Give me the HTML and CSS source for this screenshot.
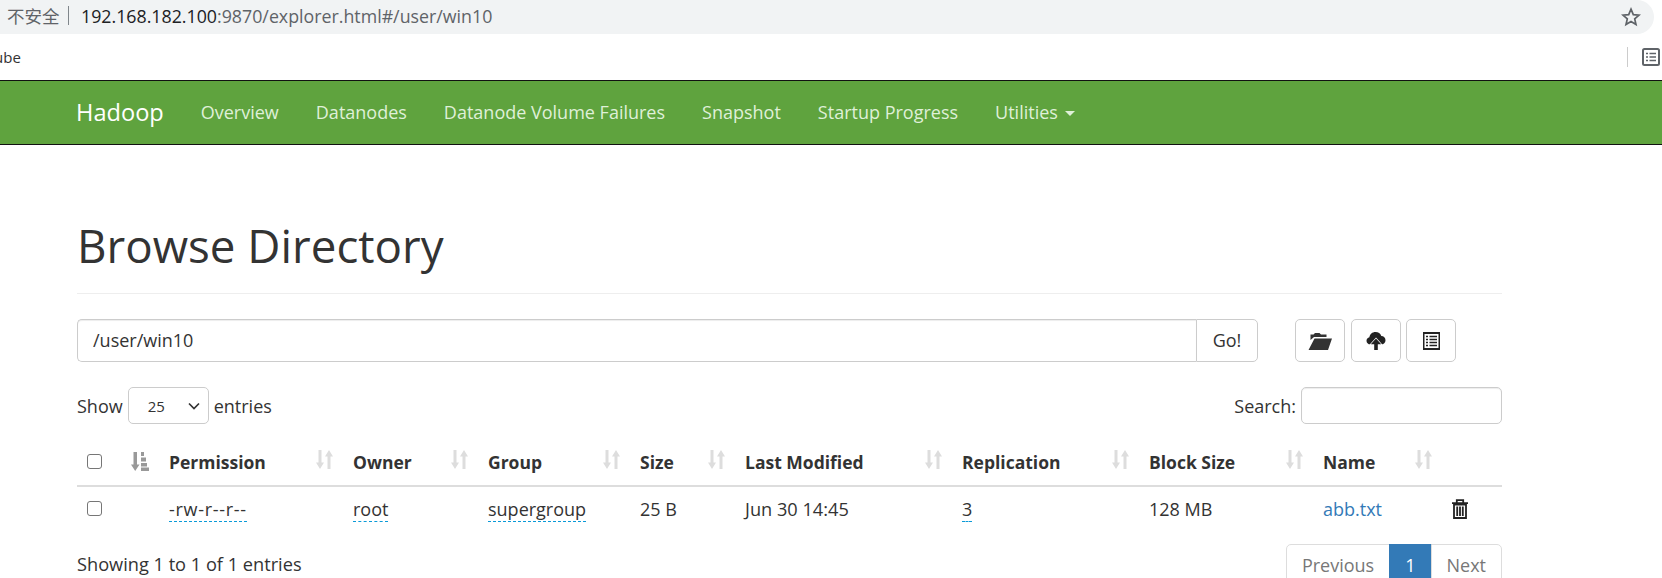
FILE: index.html
```html
<!DOCTYPE html>
<html lang="zh">
<head>
<meta charset="utf-8">
<title>Browsing HDFS</title>
<link rel="stylesheet" href="styles.css">
</head>
<body>
<div class="chrome-address">
  <div class="addr-text">
    <span class="insecure">不安全</span><span class="addr-sep"></span>
    <span class="url"><b>192.168.182.100</b>:9870/explorer.html#/user/win10</span>
  </div>
  <svg class="star" viewBox="0 0 20 20" width="20" height="20"><path d="M10 2.200l2.300 5.400 5.800.5-4.400 3.800 1.300 5.700-5-3-5 3 1.300-5.700-4.400-3.800 5.800-.5z" fill="none" stroke="#5f6368" stroke-width="1.700" stroke-linejoin="miter"/></svg>
</div>
<div class="chrome-bookmarks">
  <span class="bm-label">ube</span>
  <span class="bm-right">
    <span class="bm-divider"></span>
    <svg viewBox="0 0 18 18" width="18" height="18"><rect x="1" y="1" width="16" height="16" rx="1.500" fill="none" stroke="#5f6368" stroke-width="2"/><path d="M4 5.500h2M4 9h2M4 12.500h2M7.500 5.500h6.500M7.500 9h6.500M7.500 12.500h6.500" stroke="#5f6368" stroke-width="1.600"/></svg>
  </span>
</div>
<nav class="navbar">
  <a class="brand">Hadoop</a>
  <a class="nav-link">Overview</a>
  <a class="nav-link">Datanodes</a>
  <a class="nav-link">Datanode Volume Failures</a>
  <a class="nav-link">Snapshot</a>
  <a class="nav-link">Startup Progress</a>
  <a class="nav-link">Utilities <span class="caret"></span></a>
</nav>
<main class="container">
  <h1 class="page-title">Browse Directory</h1>
  <div class="path-row">
    <div class="input-group">
      <input class="path-input" type="text" value="/user/win10">
      <button class="go-btn">Go!</button>
    </div>
    <div class="tool-btns">
      <button class="icon-btn"><svg viewBox="0 0 24 18" width="24" height="18"><path d="M2.500 8V2.500h3L7 1h4.500l1.500 1.500h5.500V5H6L2.500 8z M6.500 6.500H24L20 18H0.500z" fill="#333"/></svg></button>
      <button class="icon-btn"><svg viewBox="0 0 20 19" width="20" height="19"><path d="M4.500 13.500C2 13.500 0.500 11.800 0.500 9.800c0-1.800 1.200-3.200 2.900-3.500C3.700 3.200 6.300 1 9.500 1c2.800 0 5 1.600 5.800 4 2.500 0 4.200 1.900 4.200 4.200 0 2.400-1.800 4.300-4.300 4.300z" fill="#222"/><path d="M10 7.500l5.200 5.800h-3.400V19H8.200v-5.700H4.800z" fill="#222" stroke="#fff" stroke-width="1.400" paint-order="stroke"/></svg></button>
      <button class="icon-btn"><svg viewBox="0 0 17 18" width="17" height="18"><rect x="0" y="0" width="17" height="18" fill="#222"/><rect x="1.500" y="2" width="14" height="14" fill="#fff"/><path d="M3 4.500h2M3 7.500h2M3 10.500h2M3 13.500h2M6.500 4.500h7.500M6.500 7.500h7.500M6.500 10.500h7.500M6.500 13.500h7.500" stroke="#222" stroke-width="1.600"/></svg></button>
    </div>
  </div>
  <div class="table-tools">
    <label class="show">Show <span class="select">25<svg viewBox="0 0 12 8" width="12" height="8"><path d="M1 1.500l5 5 5-5" fill="none" stroke="#333" stroke-width="1.700"/></svg></span> entries</label>
    <label class="search">Search: <span class="search-box"></span></label>
  </div>
  <table class="files">
    <colgroup>
      <col class="c1"><col class="c2"><col class="c3"><col class="c4"><col class="c5"><col class="c6"><col class="c7"><col class="c8"><col class="c9"><col class="c10"><col class="c11">
    </colgroup>
    <thead>
      <tr>
        <th><span class="check"></span></th>
        <th class="sorted"><svg viewBox="0 0 18 19" width="18" height="19"><path d="M2.500 0h3.500v12.500H8.500L4.200 19 0 12.500h2.500z" fill="#999"/><path d="M10 0h3v4h-3zM10 5.500h5v4h-5zM10 11h6v3.500h-6zM10 15.500h8V19h-8z" fill="#999"/></svg></th>
        <th class="sort">Permission<svg class="si" viewBox="0 0 17 19" width="17" height="19"><use href="#sort"/></svg></th>
        <th class="sort">Owner<svg class="si" viewBox="0 0 17 19" width="17" height="19"><use href="#sort"/></svg></th>
        <th class="sort">Group<svg class="si" viewBox="0 0 17 19" width="17" height="19"><use href="#sort"/></svg></th>
        <th class="sort">Size<svg class="si" viewBox="0 0 17 19" width="17" height="19"><use href="#sort"/></svg></th>
        <th class="sort">Last Modified<svg class="si" viewBox="0 0 17 19" width="17" height="19"><use href="#sort"/></svg></th>
        <th class="sort">Replication<svg class="si" viewBox="0 0 17 19" width="17" height="19"><use href="#sort"/></svg></th>
        <th class="sort">Block Size<svg class="si" viewBox="0 0 17 19" width="17" height="19"><use href="#sort"/></svg></th>
        <th class="sort">Name<svg class="si" viewBox="0 0 17 19" width="17" height="19"><use href="#sort"/></svg></th>
        <th></th>
      </tr>
    </thead>
    <tbody>
      <tr>
        <td><span class="check"></span></td>
        <td></td>
        <td><span class="editable perm">-rw-r--r--</span></td>
        <td><span class="editable">root</span></td>
        <td><span class="editable">supergroup</span></td>
        <td>25 B</td>
        <td class="date">Jun 30 14:45</td>
        <td><span class="editable">3</span></td>
        <td>128 MB</td>
        <td><a class="file-link">abb.txt</a></td>
        <td><svg class="trash" viewBox="0 0 16 20" width="16" height="20"><path d="M4.800 3.500V1.200h6.400v2.300M0 4.200h16M2 5.500h12V19H2zM5.200 7.500v9.500M8 7.500v9.500M10.800 7.500v9.500" fill="none" stroke="#222" stroke-width="1.800"/></svg></td>
      </tr>
    </tbody>
  </table>
  <div class="table-foot">
    <span class="info">Showing 1 to 1 of 1 entries</span>
    <ul class="pagination">
      <li class="pg">Previous</li>
      <li class="pg active">1</li>
      <li class="pg">Next</li>
    </ul>
  </div>
</main>
<svg class="defs" width="0" height="0"><defs><g id="sort" fill="#ddd"><path d="M2.500 0h3v12.500H8L4 19 0 12.500h2.500z"/><path d="M11.500 19V6.500H9L13 0l4 6.500h-2.500V19z"/></g></defs></svg>
</body>
</html>
```
FILE: styles.css
```css
* { box-sizing: border-box; }
html, body { margin: 0; padding: 0; height: 578px; overflow: hidden; background: #fff; }
body { font-family: "Open Sans", "Noto Sans CJK SC", sans-serif; font-size: 18px; color: #333; }

.chrome-address { height: 34px; width: 1654px; padding: 0 13px 0 7px; background: #f1f3f4; border-radius: 0 17px 17px 0; display: flex; align-items: center; justify-content: space-between; }
.addr-text { display: flex; align-items: center; padding-bottom: 3px; font-size: 17.8px; color: #5f6368; white-space: nowrap; }
.insecure { font-family: "Noto Sans CJK SC", sans-serif; font-size: 17.5px; width: 54px; }
.addr-sep { width: 1px; height: 19px; margin: 0 12px 0 7px; background: #80868b; }
.url b { font-weight: 400; color: #202124; }

.chrome-bookmarks { height: 46px; display: flex; align-items: center; justify-content: space-between; padding: 0 2px 0 0; background: #fff; }
.bm-label { margin-left: -6px; font-size: 15px; color: #333; }
.bm-right { display: flex; align-items: center; gap: 14px; }
.bm-divider { width: 1px; height: 20px; background: #ccc; }

.navbar { height: 65px; display: flex; align-items: center; padding: 0 0 2px 76px; background: #5fa33e; border-top: 1px solid #111; border-bottom: 1px solid #111; }
.brand { font-size: 23.6px; color: #fff; margin-right: 18.5px; }
.nav-link { color: #dff0d8; font-size: 18px; padding: 0 18.5px; white-space: nowrap; }
.caret { display: inline-block; width: 0; height: 0; margin-left: 2px; vertical-align: middle; border-top: 5px solid #dff0d8; border-left: 5px solid transparent; border-right: 5px solid transparent; }

.container { width: 1425px; margin-left: 77px; }
.page-title { margin: 0; padding-top: 67px; font-size: 45.7px; line-height: 66px; font-weight: 400; color: #333; border-bottom: 1px solid #eee; height: 149px; }

.path-row { display: flex; margin-top: 25px; }
.input-group { display: flex; width: 1181px; height: 43px; }
.path-input { flex: 1; height: 43px; padding: 0 15px 2px; border: 1px solid #ccc; border-right: 0; border-radius: 5px 0 0 5px; font: inherit; color: #333; box-shadow: inset 0 1px 1px rgba(0,0,0,.075); outline: 0; }
.go-btn { width: 62px; height: 43px; border: 1px solid #ccc; border-radius: 0 5px 5px 0; background: #fff; font: inherit; color: #333; padding: 0 0 2px; }
.tool-btns { display: flex; gap: 5.5px; margin-left: 37px; }
.icon-btn { width: 50px; height: 43px; padding: 0; border: 1px solid #ccc; border-radius: 5px; background: #fff; display: flex; align-items: center; justify-content: center; }

.table-tools { display: flex; justify-content: space-between; align-items: center; margin-top: 25px; height: 37px; }
.show, .search { display: flex; align-items: center; gap: 5px; }
.select { width: 81px; height: 37px; padding: 0 8px 0 19px; border: 1px solid #ccc; border-radius: 5px; background: #fff; font-size: 15px; display: flex; align-items: center; justify-content: space-between; }
.search-box { width: 201px; height: 37px; border: 1px solid #ccc; border-radius: 5px; box-shadow: inset 0 1px 1px rgba(0,0,0,.075); }

.files { width: 1425px; border-collapse: collapse; table-layout: fixed; margin-top: 19px; }
.c1 { width: 44px; } .c2 { width: 38px; } .c3 { width: 184px; } .c4 { width: 135px; } .c5 { width: 152px; } .c6 { width: 105px; } .c7 { width: 217px; } .c8 { width: 187px; } .c9 { width: 174px; } .c10 { width: 129px; } .c11 { width: 60px; }
.files th { position: relative; height: 43px; padding: 0 10px 5px; text-align: left; font-size: 17.5px; font-weight: 700; color: #333; border-bottom: 2.5px solid #ddd; white-space: nowrap; }
.files td { height: 44px; padding: 0 10px; white-space: nowrap; }
.files td.date { font-size: 18.2px; }
.si { position: absolute; right: 10px; top: 7px; }
.sorted svg { display: block; }
.check { display: block; width: 15px; height: 15px; border: 1.5px solid #767676; border-radius: 3px; background: #fff; }
.editable { border-bottom: 1px dashed #0a9ad8; }
.perm { letter-spacing: .7px; }
.file-link { color: #337ab7; }
.trash { display: block; }

.table-foot { display: flex; justify-content: space-between; margin-top: 13.5px; }
.info { padding-top: 8px; font-size: 18.2px; }
.pagination { display: flex; margin: 0; padding: 0; list-style: none; height: 43px; }
.pg { height: 43px; padding: 0 15px; line-height: 41px; border: 1px solid #ddd; margin-left: -1px; color: #777; background: #fff; }
.pg:first-child { border-radius: 5px 0 0 5px; }
.pg:last-child { border-radius: 0 5px 5px 0; }
.pg.active { background: #337ab7; border-color: #337ab7; color: #fff; }
.defs { position: absolute; }
```
